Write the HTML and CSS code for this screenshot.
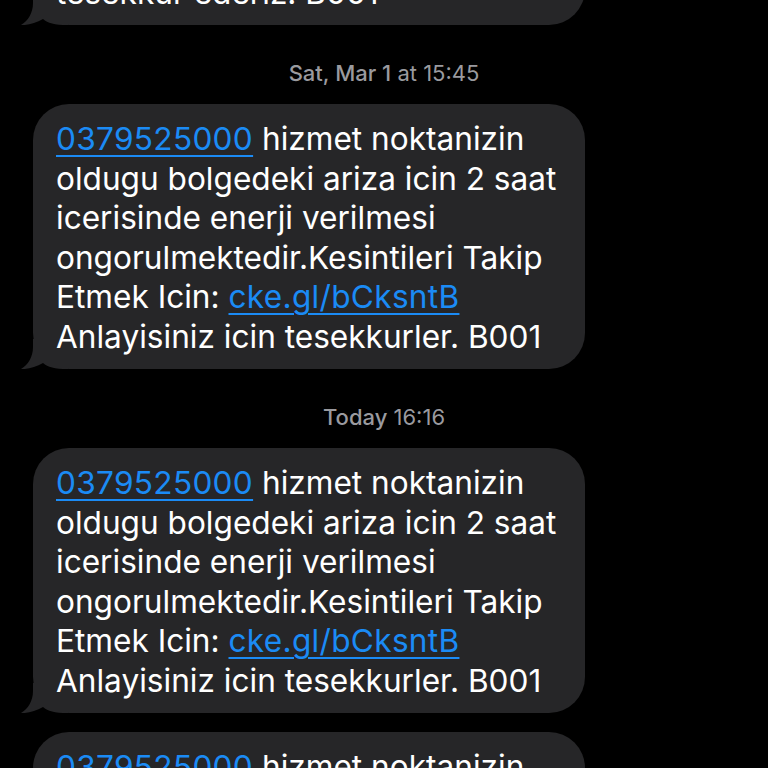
FILE: index.html
```html
<!DOCTYPE html>
<html>
<head>
<meta charset="utf-8">
<link rel="stylesheet" href="styles.css">
</head>
<body>
<div class="thread">
  <div class="bubble bubble-top">
    <svg class="tail" width="50" height="30" viewBox="0 0 50 30"><path d="M15 0 L15 8 C15 18 10 26 3 30 C10 30.5 18 28 25 24 C30 28 36 30 50 30 L50 0 Z"/></svg>
    <p class="text">Anlayisiniz icin<br>tesekkur ederiz. B001</p>
  </div>

  <div class="stamp"><b>Sat, Mar 1</b> at 15:45</div>

  <div class="bubble">
    <svg class="tail" width="50" height="30" viewBox="0 0 50 30"><path d="M15 0 L15 8 C15 18 10 26 3 30 C10 30.5 18 28 25 24 C30 28 36 30 50 30 L50 0 Z"/></svg>
    <p class="text"><a class="link">0379525000</a> hizmet noktanizin<br>oldugu bolgedeki ariza icin 2 saat<br>icerisinde enerji verilmesi<br>ongorulmektedir.Kesintileri Takip<br>Etmek Icin: <a class="link">cke.gl/bCksntB</a><br>Anlayisiniz icin tesekkurler. B001</p>
  </div>

  <div class="stamp"><b>Today</b> 16:16</div>

  <div class="bubble">
    <svg class="tail" width="50" height="30" viewBox="0 0 50 30"><path d="M15 0 L15 8 C15 18 10 26 3 30 C10 30.5 18 28 25 24 C30 28 36 30 50 30 L50 0 Z"/></svg>
    <p class="text"><a class="link">0379525000</a> hizmet noktanizin<br>oldugu bolgedeki ariza icin 2 saat<br>icerisinde enerji verilmesi<br>ongorulmektedir.Kesintileri Takip<br>Etmek Icin: <a class="link">cke.gl/bCksntB</a><br>Anlayisiniz icin tesekkurler. B001</p>
  </div>

  <div class="bubble bubble-next">
    <p class="text"><a class="link">0379525000</a> hizmet noktanizin<br>oldugu bolgedeki ariza icin 2 saat</p>
  </div>
</div>
</body>
</html>
```

FILE: styles.css
```css
html, body {
  margin: 0;
  padding: 0;
  background: #000;
  width: 768px;
  height: 768px;
  overflow: hidden;
}

.thread {
  display: flex;
  flex-direction: column;
  font-family: Inter, "Liberation Sans", sans-serif;
}

.bubble {
  position: relative;
  margin-left: 33px;
  width: 552px;
  box-sizing: border-box;
  padding: 15px 23px 13px 23px;
  background: #262628;
  border-radius: 36px;
}

.bubble-top {
  margin-top: -82px;
}

.bubble-next {
  margin-top: 19px;
}

.tail {
  position: absolute;
  left: -15px;
  bottom: 0;
  fill: #262628;
}

.text {
  position: relative;
  margin: 0;
  color: #fff;
  font-size: 31.6px;
  line-height: 39.5px;
  white-space: nowrap;
}

.link {
  color: #1b8bf5;
  text-decoration: underline;
  text-decoration-thickness: 2px;
  text-underline-offset: 5px;
  letter-spacing: 0.3px;
}

.stamp {
  padding: 35px 0 18px;
  text-align: center;
  color: #9a9a9f;
  font-size: 22px;
  line-height: 26px;
}

.stamp b {
  font-weight: 500;
}
```
